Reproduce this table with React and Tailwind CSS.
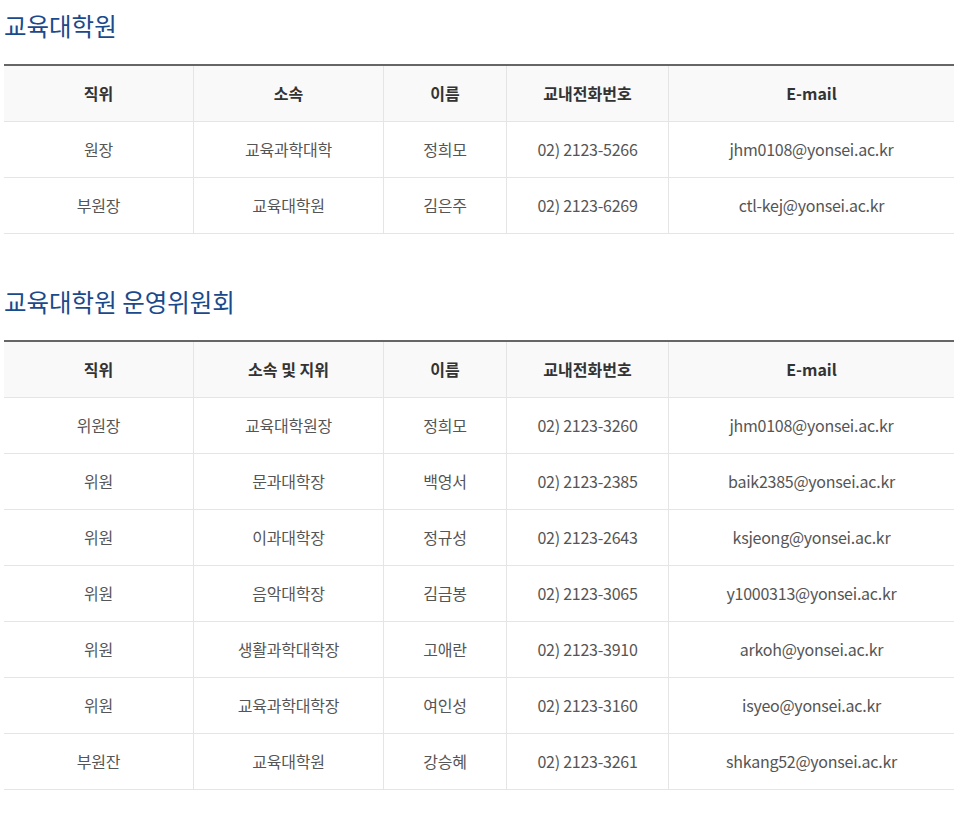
import React from 'react';

const font = { fontFamily: '"Noto Sans CJK KR", "Noto Sans", sans-serif' };

const cols = "grid grid-cols-[190px_190px_123px_162px_285px]";
const cell = "h-[56px] pb-[2px] flex items-center justify-center border-b border-[#e5e5e5]";

const board = [
  ['원장', '교육과학대학', '정희모', '02) 2123-5266', 'jhm0108@yonsei.ac.kr'],
  ['부원장', '교육대학원', '김은주', '02) 2123-6269', 'ctl-kej@yonsei.ac.kr'],
];

const committee = [
  ['위원장', '교육대학원장', '정희모', '02) 2123-3260', 'jhm0108@yonsei.ac.kr'],
  ['위원', '문과대학장', '백영서', '02) 2123-2385', 'baik2385@yonsei.ac.kr'],
  ['위원', '이과대학장', '정규성', '02) 2123-2643', 'ksjeong@yonsei.ac.kr'],
  ['위원', '음악대학장', '김금봉', '02) 2123-3065', 'y1000313@yonsei.ac.kr'],
  ['위원', '생활과학대학장', '고애란', '02) 2123-3910', 'arkoh@yonsei.ac.kr'],
  ['위원', '교육과학대학장', '여인성', '02) 2123-3160', 'isyeo@yonsei.ac.kr'],
  ['부원잔', '교육대학원', '강승혜', '02) 2123-3261', 'shkang52@yonsei.ac.kr'],
];

function Table({ head, rows }) {
  return (
    <div className="w-[950px] border-t-2 border-[#666]">
      <div className={`${cols} bg-[#f9f9f9]`}>
        {head.map((h, i) => (
          <div key={i} className={`${cell} text-[16px] font-bold text-[#333] ${i < 4 ? 'border-r' : ''}`}>{h}</div>
        ))}
      </div>
      {rows.map((r, ri) => (
        <div key={ri} className={cols}>
          {r.map((c, i) => (
            <div key={i} className={`${cell} text-[16px] tracking-[-0.25px] text-[#555] ${i < 4 ? 'border-r' : ''}`}>{c}</div>
          ))}
        </div>
      ))}
    </div>
  );
}

export default function App() {
  return (
    <div className="bg-white min-h-[817px] px-[4px]" style={font}>
      <h2 className="pt-[10px] pb-[22px] leading-[32px] text-[24.5px] text-[#1b4a8c]">교육대학원</h2>
      <Table head={['직위', '소속', '이름', '교내전화번호', 'E-mail']} rows={board} />
      <h2 className="mt-[42px] pt-[10px] pb-[22px] leading-[32px] text-[24.5px] text-[#1b4a8c]">교육대학원 운영위원회</h2>
      <Table head={['직위', '소속 및 지위', '이름', '교내전화번호', 'E-mail']} rows={committee} />
    </div>
  );
}
